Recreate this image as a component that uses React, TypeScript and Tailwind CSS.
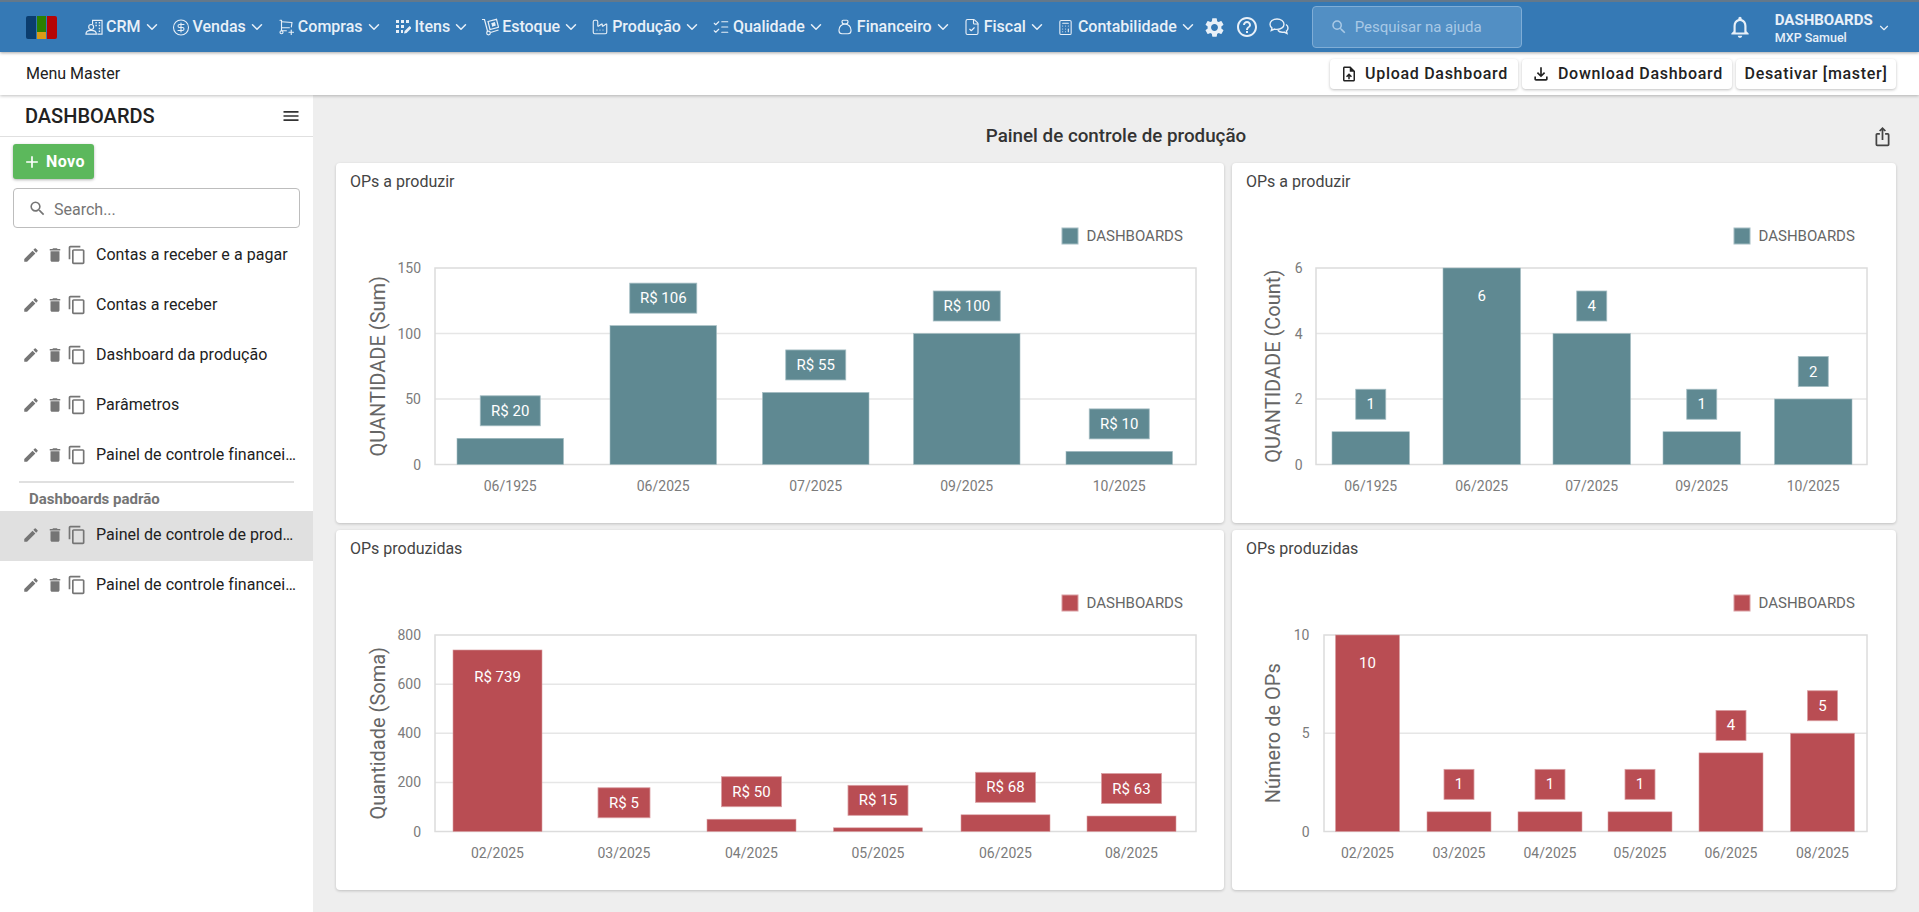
import { Calculator, ChevronDown, CircleDollarSign, Factory, FileCheck, ListChecks } from "lucide-react";
import { TbMoneybag, TbShoppingCartPlus } from "react-icons/tb";
import {
  MdAdd,
  MdContentCopy,
  MdDelete,
  MdEdit,
  MdHelpOutline,
  MdIosShare,
  MdMenu,
  MdOutlineFileDownload,
  MdOutlineNotifications,
  MdOutlineUploadFile,
  MdSearch,
  MdSettings,
} from "react-icons/md";
import type { ReactNode } from "react";

const CrmIcon = () => (
  <svg width="19" height="18" viewBox="0 0 19 18" fill="none" stroke="currentColor" strokeWidth="1.2">
    <path d="M8 6V2h10v14.5H13" />
    <path d="M11 4.5h1.5M14.5 4.5H16M11 7.5h1.5M14.5 7.5H16M14.5 10.5H16M14.5 13.5H16" strokeWidth="1.6" />
    <circle cx="6.5" cy="9" r="2.6" />
    <path d="M1 16.5c0-3 2.2-4 5.5-4s5.5 1 5.5 4z" />
  </svg>
);

const ItensIcon = () => (
  <svg width="16" height="16" viewBox="0 0 16 16" fill="currentColor">
    <path d="M1 1h3v3H1zM6 1h3v3H6zM11 1h3v3h-3zM1 6h3v3H1zM6 6h3v3H6zM1 11h3v3H1zM6 11h2v3H6z" />
    <path d="M9 14.5l.6-2.6 5-5 2 2-5 5z" />
  </svg>
);

const EstoqueIcon = () => (
  <svg width="18" height="18" viewBox="0 0 18 18" fill="none" stroke="currentColor" strokeWidth="1.2">
    <path d="M1 1.5h2.5l3 11.5" />
    <circle cx="7.5" cy="15" r="1.8" />
    <path d="M9.5 14.5l8-2.5" />
    <path d="M7 3.5l8.5-2.2 2 8-8.5 2.2z" />
    <path d="M11 5.5l2.5-.7.6 2.4-2.5.7z" fill="currentColor" />
  </svg>
);

const ChatIcon = () => (
  <svg width="22" height="20" viewBox="0 0 22 20" fill="none" stroke="currentColor" strokeWidth="1.4">
    <path d="M9 2C5 2 2 4.3 2 7.2c0 1.5.8 2.8 2 3.8l-.7 2.6 3.2-1.5c.8.2 1.6.3 2.5.3 4 0 7-2.3 7-5.2S13 2 9 2z" />
    <path d="M18 7.5c1.3.9 2 2 2 3.4 0 1.2-.6 2.3-1.6 3.1l.6 2.4-2.9-1.3c-2.4.5-5-.2-6.3-1.8" />
  </svg>
);

const navItems: { label: string; icon: ReactNode }[] = [
  { label: "CRM", icon: <CrmIcon /> },
  { label: "Vendas", icon: <CircleDollarSign size={19} strokeWidth={1.4} /> },
  { label: "Compras", icon: <TbShoppingCartPlus size={20} strokeWidth={1.5} /> },
  { label: "Itens", icon: <ItensIcon /> },
  { label: "Estoque", icon: <EstoqueIcon /> },
  { label: "Produção", icon: <Factory size={18} strokeWidth={1.5} /> },
  { label: "Qualidade", icon: <ListChecks size={18} strokeWidth={1.5} /> },
  { label: "Financeiro", icon: <TbMoneybag size={18} strokeWidth={1.5} /> },
  { label: "Fiscal", icon: <FileCheck size={18} strokeWidth={1.5} /> },
  { label: "Contabilidade", icon: <Calculator size={17} strokeWidth={1.5} /> },
];

type Bar = { cat: string; x: number; value: number; label: string };
type Chart = {
  title: string;
  axis: string;
  color: string;
  border: string;
  max: number;
  step: number;
  l: number;
  r: number;
  tickX: number;
  titleX: number;
  barW: number;
  bars: Bar[];
};

const teal = "#5f8992";
const tealBorder = "#a3bcc2";
const red = "#b94d53";
const redBorder = "#d99ea2";

const charts: Chart[] = [
  {
    title: "OPs a produzir",
    axis: "QUANTIDADE (Sum)",
    color: teal,
    border: tealBorder,
    max: 150,
    step: 50,
    l: 99,
    r: 860,
    tickX: 85,
    titleX: 42,
    barW: 106.5,
    bars: [
      { cat: "06/1925", x: 121, value: 20, label: "R$ 20" },
      { cat: "06/2025", x: 274, value: 106, label: "R$ 106" },
      { cat: "07/2025", x: 426.5, value: 55, label: "R$ 55" },
      { cat: "09/2025", x: 577.5, value: 100, label: "R$ 100" },
      { cat: "10/2025", x: 730, value: 10, label: "R$ 10" },
    ],
  },
  {
    title: "OPs a produzir",
    axis: "QUANTIDADE (Count)",
    color: teal,
    border: tealBorder,
    max: 6,
    step: 2,
    l: 84,
    r: 635,
    tickX: 70.5,
    titleX: 41,
    barW: 77.5,
    bars: [
      { cat: "06/1925", x: 100, value: 1, label: "1" },
      { cat: "06/2025", x: 211, value: 6, label: "6" },
      { cat: "07/2025", x: 321, value: 4, label: "4" },
      { cat: "09/2025", x: 431, value: 1, label: "1" },
      { cat: "10/2025", x: 542.5, value: 2, label: "2" },
    ],
  },
  {
    title: "OPs produzidas",
    axis: "Quantidade (Soma)",
    color: red,
    border: redBorder,
    max: 800,
    step: 200,
    l: 99,
    r: 860,
    tickX: 85,
    titleX: 42,
    barW: 89,
    bars: [
      { cat: "02/2025", x: 117, value: 739, label: "R$ 739" },
      { cat: "03/2025", x: 243.5, value: 5, label: "R$ 5" },
      { cat: "04/2025", x: 371, value: 50, label: "R$ 50" },
      { cat: "05/2025", x: 497.5, value: 15, label: "R$ 15" },
      { cat: "06/2025", x: 625, value: 68, label: "R$ 68" },
      { cat: "08/2025", x: 751, value: 63, label: "R$ 63" },
    ],
  },
  {
    title: "OPs produzidas",
    axis: "Número de OPs",
    color: red,
    border: redBorder,
    max: 10,
    step: 5,
    l: 92,
    r: 635,
    tickX: 77.5,
    titleX: 41,
    barW: 64,
    bars: [
      { cat: "02/2025", x: 103.5, value: 10, label: "10" },
      { cat: "03/2025", x: 195, value: 1, label: "1" },
      { cat: "04/2025", x: 286, value: 1, label: "1" },
      { cat: "05/2025", x: 376, value: 1, label: "1" },
      { cat: "06/2025", x: 467, value: 4, label: "4" },
      { cat: "08/2025", x: 558.5, value: 5, label: "5" },
    ],
  },
];

const labelWidth = (label: string) => {
  if (label.length === 1) return 30;
  if (label.length === 4) return 52;
  if (label.length === 5) return 60;
  return 67;
};

function ChartCard({ chart }: { chart: Chart }) {
  const top = 68;
  const bottom = 264.5;
  const yOf = (v: number) => bottom - (v / chart.max) * (bottom - top);
  const ticks: number[] = [];
  for (let v = 0; v <= chart.max; v += chart.step) ticks.push(v);
  const cardW = chart.r > 700 ? 888 : 664;

  return (
    <div className="flex flex-col rounded bg-white shadow-[0_1px_3px_rgba(0,0,0,0.2)]">
      <div className="h-[37px] pl-[14px] pt-[7px] text-[16px] leading-[24px] text-[#444]">{chart.title}</div>
      <svg width={cardW} height={323} className="block" fontFamily="Roboto, sans-serif">
        <rect x={cardW - 162} y={28} width={16} height={16} fill={chart.color} stroke={chart.border} />
        <text x={cardW - 137.5} y={41} fontSize={15} fill="#666">
          DASHBOARDS
        </text>

        {ticks.map((v) => (
          <g key={v}>
            {v > 0 && v < chart.max && (
              <line x1={chart.l} x2={chart.r} y1={yOf(v)} y2={yOf(v)} stroke="#e6e6e6" strokeWidth={1.5} />
            )}
            <text x={chart.tickX} y={yOf(v) + 5} fontSize={14} textAnchor="end" fill="#7b7b7b">
              {v}
            </text>
          </g>
        ))}
        <rect x={chart.l} y={top} width={chart.r - chart.l} height={bottom - top} fill="none" stroke="#dcdcdc" strokeWidth={1.5} />

        <text
          transform={`translate(${chart.titleX + 7} ${(top + bottom) / 2}) rotate(-90)`}
          fontSize={20}
          textAnchor="middle"
          fill="#666"
        >
          {chart.axis}
        </text>

        {chart.bars.map((bar) => {
          const y = yOf(bar.value);
          const cx = bar.x + chart.barW / 2;
          const inside = y - top < 45;
          const w = labelWidth(bar.label);
          return (
            <g key={bar.cat}>
              {bottom - y > 2 && (
                <rect x={bar.x} y={y} width={chart.barW} height={bottom - y} fill={chart.color} stroke={chart.border} strokeWidth={0.6} />
              )}
              {!inside && (
                <rect x={cx - w / 2} y={y - 42.5} width={w} height={30} fill={chart.color} stroke={chart.border} strokeWidth={0.8} />
              )}
              <text
                x={cx}
                y={inside ? y + 32.5 : y - 22.5}
                fontSize={15}
                textAnchor="middle"
                fill="#fff"
              >
                {bar.label}
              </text>
              <text x={cx} y={291} fontSize={14} textAnchor="middle" fill="#7b7b7b">
                {bar.cat}
              </text>
            </g>
          );
        })}
      </svg>
    </div>
  );
}

const sideRows = [
  "Contas a receber e a pagar",
  "Contas a receber",
  "Dashboard da produção",
  "Parâmetros",
  "Painel de controle financeiro",
];

function SideRow({ label, active }: { label: string; active?: boolean }) {
  return (
    <div className={`flex h-[50px] items-center pb-[2px] pl-[22px] ${active ? "bg-[#e0e0e0]" : ""}`}>
      <MdEdit size={18} className="shrink-0 text-[#757575]" />
      <MdDelete size={18} className="ml-[6px] shrink-0 text-[#757575]" />
      <MdContentCopy size={20} className="ml-[3px] shrink-0 text-[#757575]" />
      <span className="ml-[9px] w-[201px] truncate text-[16px] tracking-[0.04px] text-[#212121]">{label}</span>
    </div>
  );
}

function ToolButton({ width, children }: { width: string; children: ReactNode }) {
  return (
    <button
      className={`flex h-[30px] items-center justify-center gap-[7px] rounded bg-white text-[16px] font-medium tracking-[0.7px] text-[#222] shadow-[0_1px_3px_rgba(0,0,0,0.25)] ${width}`}
    >
      {children}
    </button>
  );
}

export default function App() {
  return (
    <div className="flex h-screen flex-col overflow-hidden bg-[#eeeeee] font-['Roboto',sans-serif]">
      <header className="z-20 flex h-[52px] shrink-0 items-center border-t-2 border-[#64788a] bg-[#3579b5] text-[#e8f0f8] shadow-[0_1px_3px_rgba(0,0,0,0.35)]">
        <div className="ml-[26px] flex h-[23px] w-[31px] gap-px">
          <div className="w-[10px] rounded-l-[2px] bg-[#0b3d6e]" />
          <div className="flex w-[10px] flex-col">
            <div className="h-[16px] bg-[#2b8000]" />
            <div className="flex-1 bg-[#d99a16]" />
          </div>
          <div className="w-[10px] rounded-r-[2px] bg-[#b50505]" />
        </div>

        <nav className="ml-[28px] flex items-center gap-[11px]">
          {navItems.map((item) => (
            <a key={item.label} className="flex items-center text-[16px] font-medium">
              <span className="flex w-[18px] shrink-0 justify-center">{item.icon}</span>
              <span className="ml-[3px]">{item.label}</span>
              <ChevronDown size={18} strokeWidth={2} className="ml-[2px]" />
            </a>
          ))}
        </nav>

        <MdSettings size={23} className="ml-[6px]" />
        <MdHelpOutline size={24} className="ml-[9px]" />
        <span className="ml-[9px]">
          <ChatIcon />
        </span>

        <div className="ml-[22px] flex h-[42px] w-[210px] items-center rounded border border-[#7fadd6] bg-[#528fc4] pl-[17px]">
          <MdSearch size={18} className="text-[#a9c9e6]" />
          <span className="ml-[7px] text-[15px] text-[#a9c9e6]">Pesquisar na ajuda</span>
        </div>

        <MdOutlineNotifications size={26} className="ml-[205px]" />

        <div className="ml-[22px] flex flex-col pt-[4px]">
          <span className="text-[15px] leading-[16px] font-bold">DASHBOARDS</span>
          <span className="mt-[2px] text-[12.5px] leading-[16px] font-medium">MXP Samuel</span>
        </div>
        <ChevronDown size={14} strokeWidth={2} className="ml-[4px] mt-[2px]" />
      </header>

      <div className="z-10 flex h-[43px] shrink-0 items-center justify-between bg-white pl-[26px] pr-[23px] shadow-[0_1px_3px_rgba(0,0,0,0.25)]">
        <span className="text-[16px] text-[#212121]">Menu Master</span>
        <div className="flex gap-[4px]">
          <ToolButton width="w-[188px]">
            <MdOutlineUploadFile size={18} />
            Upload Dashboard
          </ToolButton>
          <ToolButton width="w-[210px]">
            <MdOutlineFileDownload size={20} />
            Download Dashboard
          </ToolButton>
          <ToolButton width="w-[160px]">Desativar [master]</ToolButton>
        </div>
      </div>

      <div className="flex min-h-0 flex-1">
        <aside className="w-[313px] shrink-0 bg-white">
          <div className="flex h-[42px] items-center justify-between border-b border-[#e0e0e0] pl-[25px] pr-[12px]">
            <span className="text-[20px] font-medium text-[#212121]">DASHBOARDS</span>
            <MdMenu size={20} className="text-[#333]" />
          </div>
          <div className="px-[13px] pt-[7px]">
            <button className="flex h-[35px] w-[81px] items-center justify-center gap-[4px] rounded-[3px] bg-[#5cb85c] text-[16px] font-bold tracking-[0.5px] text-white shadow-[0_1px_3px_rgba(0,0,0,0.3)]">
              <MdAdd size={20} />
              Novo
            </button>
            <div className="mt-[9px] flex h-[40px] w-[287px] items-center rounded-[4px] border border-[#bdbdbd] pl-[14px]">
              <MdSearch size={19} className="text-[#757575]" />
              <span className="ml-[7px] pt-[3px] text-[16px] text-[#757575]">Search...</span>
            </div>
          </div>
          <div className="mt-[3px]">
            {sideRows.map((label) => (
              <SideRow key={label} label={label} />
            ))}
          </div>
          <div className="mx-[19px] h-[2px] w-[275px] bg-[#e0e0e0]" />
          <div className="h-[28px] pl-[29px] pt-[5px] text-[15px] font-bold leading-[22px] text-[#757575]">
            Dashboards padrão
          </div>
          <SideRow label="Painel de controle de produção" active />
          <SideRow label="Painel de controle financeiro" />
        </aside>

        <main className="min-w-0 flex-1 pl-[23px]">
          <div className="relative flex h-[68px] w-[1560px] items-center justify-center pt-[14px]">
            <h1 className="text-[18.8px] font-medium text-[#333]">Painel de controle de produção</h1>
            <MdIosShare size={21} className="absolute right-[3px] top-[31px] text-[#444]" />
          </div>
          <div className="grid grid-cols-[888px_664px] grid-rows-[360px_360px] gap-x-[8px] gap-y-[7px]">
            {charts.map((chart) => (
              <ChartCard key={chart.axis} chart={chart} />
            ))}
          </div>
        </main>
      </div>
    </div>
  );
}
